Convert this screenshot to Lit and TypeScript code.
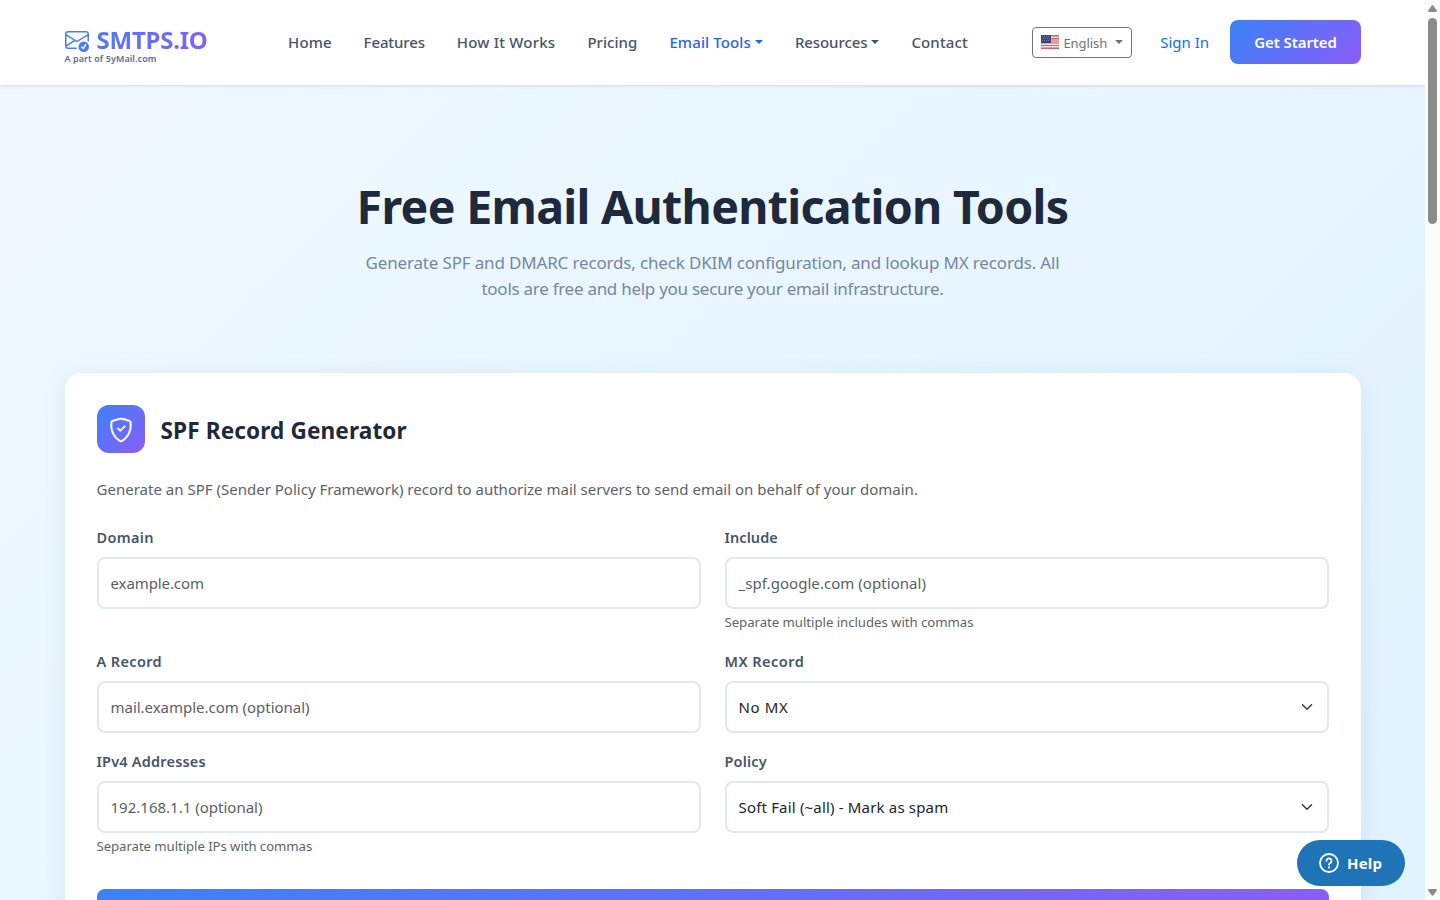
import { LitElement, html, css, svg, nothing } from "lit";
import { customElement } from "lit/decorators.js";
import { styleMap } from "lit/directives/style-map.js";
import { classMap } from "lit/directives/class-map.js";

interface NavItem { label: string; tracking: number; active?: boolean; menu?: boolean; }
interface Field { label: string; labelTracking: number; value: string; tracking: number; hint?: string; hintTracking?: number; select?: boolean; }

const NAV: NavItem[] = [
  { label: "Home", tracking: 0.075 },
  { label: "Features", tracking: -0.12 },
  { label: "How It Works", tracking: 0.205 },
  { label: "Pricing", tracking: 0.048 },
  { label: "Email Tools", tracking: 0.119, active: true, menu: true },
  { label: "Resources", tracking: -0.085, menu: true },
  { label: "Contact", tracking: 0.139 },
];

const FIELDS: Field[] = [
  { label: "Domain", labelTracking: 0.33, value: "example.com", tracking: -0.1 },
  { label: "Include", labelTracking: 0.08, value: "_spf.google.com (optional)", tracking: 0.045, hint: "Separate multiple includes with commas", hintTracking: -0.035 },
  { label: "A Record", labelTracking: 0.36, value: "mail.example.com (optional)", tracking: -0.027 },
  { label: "MX Record", labelTracking: 0.45, value: "No MX", tracking: 0.6, select: true },
  { label: "IPv4 Addresses", labelTracking: 0.2, value: "192.168.1.1 (optional)", tracking: 0.008, hint: "Separate multiple IPs with commas", hintTracking: -0.065 },
  { label: "Policy", labelTracking: 0.201, value: "Soft Fail (~all) - Mark as spam", tracking: 0.175, select: true },
];

const track = (n = 0) => styleMap({ letterSpacing: `${n}px` });

@customElement("app-header")
class AppHeader extends LitElement {
  static styles = css`
    :host { display: block; position: relative; font: 500 15px/24px "Noto Sans", "Open Sans", sans-serif; }
    .bar { box-sizing: border-box; height: 85px; background: #fefefe;
      box-shadow: 0 1px 3px rgba(0, 0, 0, 0.12); display: flex; align-items: center; padding: 0 64px 1px 64.5px; white-space: nowrap; }
    .brand { width: 223.6px; padding-top: 8px; }
    .logo { display: flex; align-items: center; gap: 8px; height: 24px; }
    .logo svg { width: 24px; height: 24px; }
    .name { font-size: 24px; line-height: 24px; font-weight: 700; letter-spacing: -0.237px;
      background: linear-gradient(110deg, #5079f7, #855ff6); -webkit-background-clip: text; background-clip: text; color: transparent; }
    .tag { font-size: 9px; line-height: 13px; font-weight: 600; letter-spacing: 0.079px; color: #5c6b9b; }
    nav { display: flex; gap: 32px; color: #475569; }
    .item { display: flex; align-items: center; gap: 4px; }
    .active { color: #2563eb; }
    .caret { width: 0; height: 0; border: 4.5px solid transparent; border-top: 4.5px solid currentColor; border-bottom: 0; }
    .right { margin-left: auto; display: flex; align-items: center; }
    .lang { box-sizing: border-box; width: 100px; height: 31px; border: 1px solid #6c757d; border-radius: 4px; padding: 0 8px;
      display: flex; align-items: center; color: #6c757d; font-size: 13px; font-weight: 400; letter-spacing: -0.08px; }
    .lang svg { width: 18px; height: 14px; margin-right: 5px; }
    .lang span { padding-top: 1px; margin-left: -0.7px; }
    .lang .caret { margin-left: auto; margin-top: -1px; }
    .signin { color: #0d6efd; font-weight: 400; margin: 0 21px 0 28px; }
    .cta { width: 131px; height: 44px; line-height: 44px; text-align: center; border-radius: 8px; color: #fff; font-weight: 600;
      letter-spacing: -0.08px; background: linear-gradient(135deg, #3b82f6, #8b5cf6); }
  `;
  render() {
    return html`<header class="bar">
      <div class="brand">
        <div class="logo">
          <svg viewBox="0 0 16 16" fill="url(#lg)">
            <defs><linearGradient id="lg" x1="0" y1="0" x2="1" y2="1"><stop stop-color="#3f82f6" /><stop offset="1" stop-color="#5b74f7" /></linearGradient></defs>
            <path d="M2 2a2 2 0 0 0-2 2v8.01A2 2 0 0 0 2 14h5.5a.5.5 0 0 0 0-1H2a1 1 0 0 1-.966-.741l5.64-3.471L8 9.583l7-4.2V8.5a.5.5 0 0 0 1 0V4a2 2 0 0 0-2-2zm3.708 6.208L1 11.105V5.383zM1 4.217V4a1 1 0 0 1 1-1h12a1 1 0 0 1 1 1v.217l-7 4.2z" />
            <path d="M16 12.5a3.5 3.5 0 1 1-7 0 3.5 3.5 0 0 1 7 0m-1.993-1.679a.5.5 0 0 0-.686.172l-1.17 1.95-.547-.547a.5.5 0 0 0-.708.708l.774.773a.75.75 0 0 0 1.174-.144l1.335-2.226a.5.5 0 0 0-.172-.686" />
          </svg>
          <span class="name">SMTPS.IO</span>
        </div>
        <div class="tag">A part of 5yMail.com</div>
      </div>
      <nav>
        ${NAV.map((n) => html`<a class=${classMap({ item: true, active: !!n.active })}><span style=${track(n.tracking)}>${n.label}</span>${n.menu ? html`<i class="caret"></i>` : nothing}</a>`)}
      </nav>
      <div class="right">
        <div class="lang">
          <svg viewBox="0 0 18 14" shape-rendering="crispEdges">
            <rect width="18" height="14" fill="#e0a0a6" />
            ${[2, 9, 11].map((y) => svg`<rect y=${y} width="18" height="1" fill="#f6e3e5" />`)}
            ${[0, 3, 10, 13].map((y) => svg`<rect y=${y} width="18" height="1" fill="#d0616c" />`)}
            <rect width="10" height="8" fill="#3c4678" />
            ${[1, 3, 5].map((y) => [1, 3, 5, 7].map((x) => svg`<rect x=${x + (y === 3 ? 1 : 0)} y=${y} width="1" height="1" fill="#6e779f" />`))}
          </svg>
          <span>English</span><i class="caret"></i>
        </div>
        <a class="signin">Sign In</a>
        <a class="cta">Get Started</a>
      </div>
    </header>`;
  }
}

@customElement("form-field")
class FormField extends LitElement {
  static properties = { field: { attribute: false } };
  declare field: Field;
  static styles = css`
    :host { display: block; font: 400 15px/24px "Noto Sans", "Open Sans", sans-serif; white-space: nowrap; }
    .label { font-size: 14.5px; font-weight: 600; color: #475569; margin: 0 0 8px -0.5px; }
    .box { box-sizing: border-box; height: 52px; border: 2px solid #e2e8f0; border-radius: 8px; padding: 0 12px 0 11.5px; background: #fff;
      display: flex; align-items: center; justify-content: space-between; color: #595f66; }
    .select { color: #212529; }
    .box svg { width: 16px; height: 12px; }
    .hint { font-size: 13.2px; line-height: 20px; margin: 3px 0 0 -0.5px; height: 21px; color: #5d646b; }
  `;
  render() {
    const f = this.field;
    return html`<div class="label" style=${track(f.labelTracking)}>${f.label}</div>
      <div class=${classMap({ box: true, select: !!f.select })}>
        <span style=${track(f.tracking)}>${f.value}</span>
        ${f.select ? html`<svg viewBox="0 0 16 16"><path fill="none" stroke="#343a40" stroke-linecap="round" stroke-linejoin="round" stroke-width="2" d="m2 5 6 6 6-6" /></svg>` : nothing}
      </div>
      ${f.hint ? html`<div class="hint" style=${track(f.hintTracking)}>${f.hint}</div>` : nothing}`;
  }
}

@customElement("app-root")
class AppRoot extends LitElement {
  static styles = css`
    :host { display: block; height: 900px; overflow: hidden; position: relative; font: 400 15px/24px "Noto Sans", "Open Sans", sans-serif; }
    .window { display: flex; height: 900px; }
    .page { width: 1425px; height: 900px; overflow: hidden; background: linear-gradient(135deg, #f0f9ff, #e0f2fe); }
    .hero { padding-top: 93px; text-align: center; white-space: nowrap; }
    h1 { margin: 0; font-size: 46.5px; line-height: 57px; letter-spacing: -0.69px; font-weight: 700; color: #1e293b; }
    .lead { font-size: 17px; line-height: 26px; color: #7787a0; margin: 15px 0 0; }
    .l1 { letter-spacing: -0.16px; }
    .l2 { letter-spacing: -0.275px; }
    .card { box-sizing: border-box; margin: 71px 64px 0 65px; width: 1296px; height: 620px; padding: 32px; border-radius: 16px; background: #fff;
      box-shadow: 0 4px 24px rgba(30, 70, 110, 0.09); }
    .head { display: flex; align-items: center; gap: 15.5px; height: 48px; }
    .badge { width: 48px; height: 48px; border-radius: 12px; background: linear-gradient(135deg, #3b82f6, #8b5cf6);
      display: flex; align-items: center; justify-content: center; }
    .badge svg { width: 24px; height: 24px; margin: 1px 1px 0 0; }
    h2 { margin: 4px 0 0; font-size: 22.6px; letter-spacing: 0.12px; line-height: 30px; font-weight: 700; color: #1e293b; }
    .desc { margin: 24px 0 24px -0.5px; color: #5b6269; letter-spacing: 0.01px; white-space: nowrap; }
    .grid { display: grid; grid-template-columns: 1fr 1fr; gap: 16px 24px; }
    .submit { margin-top: 32px; height: 50px; border-radius: 8px; background: linear-gradient(135deg, #3b82f6, #8b5cf6); }
    .scroll { box-sizing: border-box; width: 15px; height: 900px; background: #fcfcfc; padding: 5px 3px 4px; display: flex; flex-direction: column; }
    .scroll svg { width: 9px; height: 7px; display: block; }
    .thumb { width: 9px; height: 206px; margin-top: 6px; border-radius: 5px; background: #8b8b8b; }
    .down { margin-top: auto; }
    .help { position: absolute; left: 1297px; top: 840px; width: 108px; height: 46px; border-radius: 23px; background: #1f73b7; color: #fff;
      box-sizing: border-box; padding-left: 22px; display: flex; align-items: center; gap: 8px; font-weight: 700; font-size: 15px; letter-spacing: 0.2px; }
    .help svg { width: 20px; height: 20px; }
  `;
  render() {
    return html`<div class="window">
        <div class="page">
          <app-header></app-header>
          <section class="hero">
            <h1>Free Email Authentication Tools</h1>
            <p class="lead">
              <span class="l1">Generate SPF and DMARC records, check DKIM configuration, and lookup MX records. All</span><br />
              <span class="l2">tools are free and help you secure your email infrastructure.</span>
            </p>
          </section>
          <section class="card">
            <div class="head">
              <div class="badge">
                <svg viewBox="0 0 16 16" fill="#fff" stroke="#fff" stroke-width="0.3" overflow="visible">
                  <path d="M5.338 1.59a61 61 0 0 0-2.837.856.48.48 0 0 0-.328.39c-.554 4.157.726 7.19 2.253 9.188a10.7 10.7 0 0 0 2.287 2.233c.346.244.652.42.893.533q.18.085.293.118a1 1 0 0 0 .101.025 1 1 0 0 0 .1-.025q.114-.034.294-.118c.24-.113.547-.29.893-.533a10.7 10.7 0 0 0 2.287-2.233c1.527-1.997 2.807-5.031 2.253-9.188a.48.48 0 0 0-.328-.39c-.651-.213-1.75-.56-2.837-.855C9.552 1.29 8.531 1.067 8 1.067c-.53 0-1.552.223-2.662.524zM5.072.56C6.157.265 7.31 0 8 0s1.843.265 2.928.56c1.11.3 2.229.655 2.887.87a1.54 1.54 0 0 1 1.044 1.262c.596 4.477-.787 7.795-2.465 9.99a11.8 11.8 0 0 1-2.517 2.453 7 7 0 0 1-1.048.625c-.28.132-.581.24-.829.24s-.548-.108-.829-.24a7 7 0 0 1-1.048-.625 11.8 11.8 0 0 1-2.517-2.453C1.928 10.487.545 7.169 1.141 2.692A1.54 1.54 0 0 1 2.185 1.43 63 63 0 0 1 5.072.56" />
                  <path d="M10.854 5.146a.5.5 0 0 1 0 .708l-3 3a.5.5 0 0 1-.708 0l-1.5-1.5a.5.5 0 1 1 .708-.708L7.5 7.793l2.646-2.647a.5.5 0 0 1 .708 0" />
                </svg>
              </div>
              <h2>SPF Record Generator</h2>
            </div>
            <p class="desc">Generate an SPF (Sender Policy Framework) record to authorize mail servers to send email on behalf of your domain.</p>
            <div class="grid">${FIELDS.map((f) => html`<form-field .field=${f}></form-field>`)}</div>
            <div class="submit"></div>
          </section>
        </div>
        <div class="scroll">
          <svg viewBox="0 0 9 7" fill="#8b8b8b"><path d="M3.8.6Q4.5-.3 5.2.6L8.8 5.6Q9 7 8 7H1Q0 7 .2 5.6z" /></svg>
          <div class="thumb"></div>
          <svg class="down" viewBox="0 0 9 7" fill="#8b8b8b"><path d="M3.8 6.4Q4.5 7.3 5.2 6.4L8.8 1.4Q9 0 8 0H1Q0 0 .2 1.4z" /></svg>
        </div>
      </div>
      <div class="help">
        <svg viewBox="0 0 20 20" fill="none" stroke="#fff" stroke-width="1.8" stroke-linecap="round">
          <circle cx="10" cy="10" r="9" />
          <path d="M7.5 7.8a2.5 2.5 0 1 1 3.9 2.1C10.5 10.5 10 10.8 10 11.5" />
          <circle cx="10" cy="14.4" r="1.1" fill="#fff" stroke="none" />
        </svg>
        <span>Help</span>
      </div>`;
  }
}
